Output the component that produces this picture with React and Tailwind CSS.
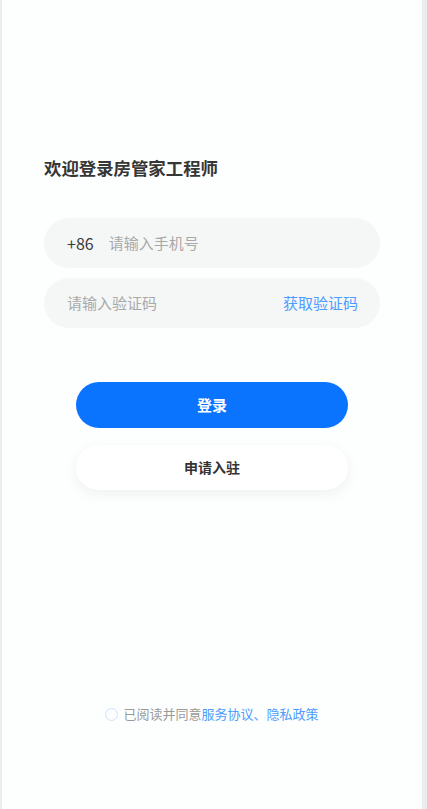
import { useState } from "react";

const FONT = { fontFamily: '"Noto Sans CJK SC", "Noto Sans", sans-serif' };

export default function App() {
  const [agreed, setAgreed] = useState(false);

  return (
    <div className="flex min-h-[809px] w-full bg-[#ececec]" style={FONT}>
      <div className="ml-[2px] mr-[5px] flex-1 bg-[#fdfefe]">
        <div className="px-[42px] pt-[156px]">
          <h1 className="text-[17.4px] leading-[24px] font-bold text-[#363636]">欢迎登录房管家工程师</h1>

          <div className="mt-[38px] flex h-[50px] items-center rounded-full bg-[#f5f7f7] pl-[23px] pr-[22px]">
            <span className="text-[16px] text-[#3a3a3a]">+86</span>
            <span className="ml-[15px] text-[15px] text-[#a9a9a9]">请输入手机号</span>
          </div>

          <div className="mt-[10px] flex h-[50px] items-center justify-between rounded-full bg-[#f5f7f7] pl-[23px] pr-[22px]">
            <span className="text-[15px] text-[#a9a9a9]">请输入验证码</span>
            <span className="text-[15px] text-[#4c9cff]">获取验证码</span>
          </div>

          <div className="mx-[32px] mt-[54px] flex flex-col gap-[17px]">
            <button className="h-[46px] rounded-full bg-[#0b74ff] text-[15px] font-bold text-white">登录</button>
            <button className="h-[45px] rounded-full bg-white text-[14px] font-bold text-[#333] shadow-[0_4px_14px_rgba(0,0,0,0.06)]">
              申请入驻
            </button>
          </div>

          <div className="mt-[214px] flex items-center justify-center text-[13px] leading-[20px]">
            <button
              onClick={() => setAgreed(!agreed)}
              className={`mr-[5px] h-[13px] w-[13px] rounded-full border-[1.5px] ${agreed ? "border-[#0b74ff] bg-[#0b74ff]" : "border-[#cfe2fd] bg-transparent"}`}
            />
            <span className="text-[#9a9a9a]">已阅读并同意</span>
            <span className="text-[#4c9cff]">服务协议、隐私政策</span>
          </div>
        </div>
      </div>
    </div>
  );
}
